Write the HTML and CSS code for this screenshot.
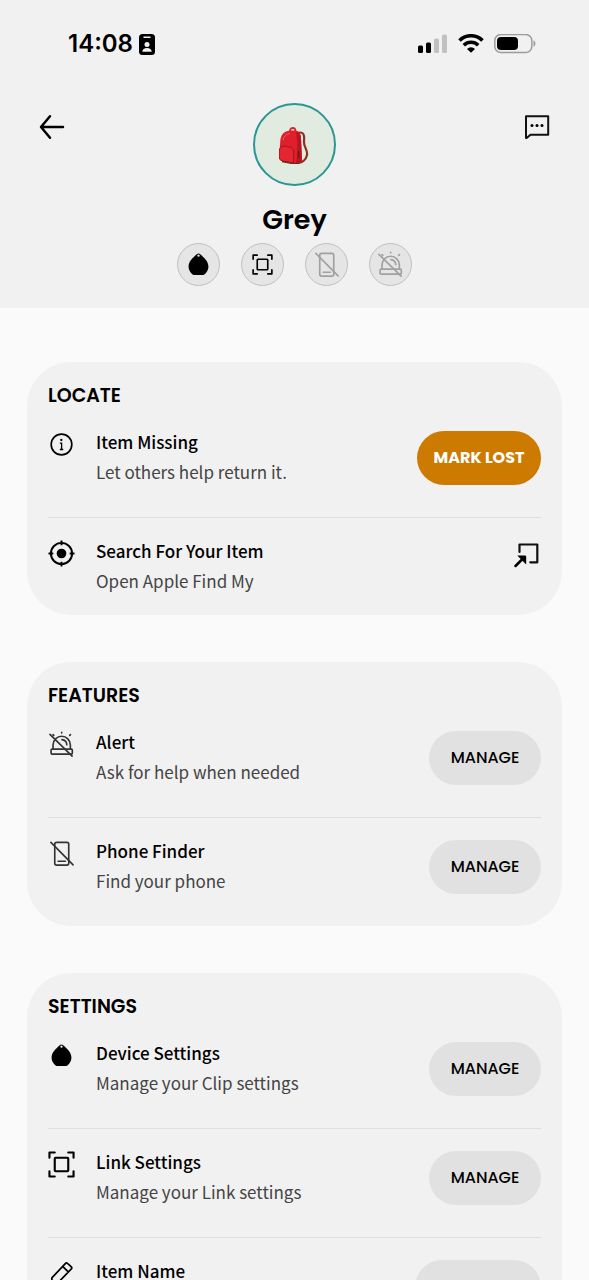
FILE: index.html
```html
<!DOCTYPE html>
<html lang="en">
<head>
<meta charset="utf-8">
<meta name="viewport" content="width=device-width, initial-scale=1">
<title>Grey</title>
<link rel="stylesheet" href="styles.css">
</head>
<body>
<svg class="sprite" aria-hidden="true">
  <symbol id="clip" viewBox="0 0 28 28">
    <path d="M14 2.500c1.400 0 2 .9 3 2 2.800 2.800 7.300 6.200 7.300 11.700 0 3.200-1.400 5.600-3.300 7.500-.9.9-1.600 1.300-2.900 1.300h-8.200c-1.300 0-2-.4-2.900-1.300-1.900-1.900-3.300-4.300-3.300-7.500 0-5.500 4.500-8.900 7.300-11.700 1-1.100 1.600-2 3-2z" fill="currentColor"/>
    <circle cx="14" cy="4.800" r="1.200" fill="#eee"/>
  </symbol>
  <symbol id="link" viewBox="0 0 28 28">
    <g fill="none" stroke="currentColor" stroke-width="2.200" stroke-linecap="round" stroke-linejoin="round">
      <rect x="7" y="7" width="14" height="14" rx="1"/>
      <path d="M1.500 7V1.500H7M21 1.500h5.500V7M26.500 21v5.500H21M7 26.500H1.500V21"/>
    </g>
  </symbol>
  <symbol id="phone-off" viewBox="0 0 28 28">
    <g fill="none" stroke="currentColor" stroke-width="1.700" stroke-linecap="round" stroke-linejoin="round">
      <rect x="7" y="2.500" width="14.500" height="23.500" rx="2"/>
      <path d="M10.500 22h7.500M3 2.500 26 25.800"/>
    </g>
  </symbol>
  <symbol id="alert-off" viewBox="0 0 28 28">
    <g fill="none" stroke="currentColor" stroke-width="1.700" stroke-linecap="round" stroke-linejoin="round">
      <rect x="3.200" y="18.800" width="22" height="5.200" rx="1"/>
      <path d="M5.200 18.500v-4a9 9 0 0 1 18 0v4M14.500 9c2.800.3 4.800 2.300 5 5.200M14.200 1.300v.8M22.500 4.500l.8-.8M6 4.500l-.8-.8M2 3.500 25 26"/>
    </g>
  </symbol>
</svg>

<div class="screen">
  <header class="hero">
    <div class="status">
      <div class="status-time">
        <span>14:08</span>
        <svg width="16" height="21" viewBox="0 0 16 21" aria-hidden="true">
          <rect width="16" height="21" rx="3.500"/>
          <path d="M5 3.200h6" stroke="#f1f1f1" stroke-width="1.500" stroke-linecap="round"/>
          <circle cx="8" cy="10.500" r="2.500" fill="#f1f1f1"/>
          <path d="M3.300 17.800c.2-2.600 2-3.800 4.700-3.800s4.500 1.200 4.700 3.800z" fill="#f1f1f1"/>
        </svg>
      </div>
      <div class="status-icons">
        <svg width="30" height="20" viewBox="0 0 30 20" aria-hidden="true">
          <rect y="11.500" width="5" height="7.500" rx="1.500"/>
          <rect x="8" y="8.500" width="5" height="10.500" rx="1.500"/>
          <g fill="#c1c1c1"><rect x="16" y="4.500" width="5" height="14.500" rx="1.500"/><rect x="24" y=".5" width="5" height="18.500" rx="1.500"/></g>
        </svg>
        <svg width="26" height="20" viewBox="0 0 26 20" aria-hidden="true">
          <g fill="none" stroke="#000" stroke-width="3.500">
            <path d="M1.500 6.500a16.200 16.200 0 0 1 23 0"/>
            <path d="M5.800 11.300a10.200 10.200 0 0 1 14.400 0"/>
          </g>
          <path d="M13 18.800 9 14.900a5.700 5.700 0 0 1 8 0z"/>
        </svg>
        <svg width="42" height="20" viewBox="0 0 42 20" aria-hidden="true">
          <rect x=".8" y=".5" width="37" height="18" rx="6" fill="none" stroke="#9c9c9c" stroke-width="1.500"/>
          <rect x="3" y="3" width="21" height="13" rx="4"/>
          <path d="M39.500 6.300c2.600 1 2.600 5.400 0 6.400z" fill="#9c9c9c"/>
        </svg>
      </div>
    </div>

    <div class="topbar">
      <button class="icon-button" aria-label="Back">
        <svg width="26" height="26" viewBox="0 0 26 26" aria-hidden="true"><path d="M24 13H2.500M11 2.300 2 13l9 10.700" fill="none" stroke="#000" stroke-width="2.500" stroke-linecap="round" stroke-linejoin="round"/></svg>
      </button>
      <div class="avatar">
        <svg width="32" height="38" viewBox="1 -1 32 38" role="img" aria-label="Backpack">
          <path d="M19 6c7-2 7.500 2 7 8s4 9 3 14-5 8-10 8" fill="none" stroke="#8c2f22" stroke-width="2.200"/>
          <path d="M12 4c0-4 5.500-4 5.500 0" fill="none" stroke="#d32b30" stroke-width="1.800"/>
          <path d="M2.200 15C2.500 7 7 3.500 13 3.500h3.500c4.500 0 6.500 3 6.500 7.500l1 22c0 2-1.500 3.500-4 3.500l-6-.3-9.500-2.200C2 33.500 1 32 1.200 29z" fill="#df1f2a"/>
          <path d="M18 5c4 1 5 3 5 7l1 21c0 2-1.500 3.500-4 3.500h-2c1.500-8 2-22 0-31.500z" fill="#b51622"/>
          <path d="M1.300 23c1-4 4-4.500 8-3.500 5 1 6.500 2.500 6.500 7l-.3 9.500-10.500-2c-3-.6-4-2-3.800-5z" fill="#e3262f" stroke="#a3131e"/>
          <path d="M4 34.500 14 36.500h7" fill="none" stroke="#74261f" stroke-width="1.300"/>
          <path d="M20.500 24v7" stroke="#4b2525" stroke-width="1.200"/>
          <path d="M5 13c1-4 3-6 7-6.500" fill="none" stroke="#ef5960"/>
        </svg>
      </div>
      <button class="icon-button" aria-label="Messages">
        <svg width="26" height="26" viewBox="0 0 26 26" aria-hidden="true"><path d="M2 24V2.200h22.200v18.600H6.500L2.600 24z" fill="none" stroke="#111" stroke-width="2" stroke-linejoin="round"/><circle cx="8" cy="11.500" r="1.500"/><circle cx="13" cy="11.500" r="1.500"/><circle cx="18" cy="11.500" r="1.500"/></svg>
      </button>
    </div>

    <h1 class="name">Grey</h1>
    <ul class="chips">
      <li class="chip"><svg class="icon-small" role="img" aria-label="Clip"><use href="#clip"/></svg></li>
      <li class="chip"><svg class="icon-tiny" role="img" aria-label="Link"><use href="#link"/></svg></li>
      <li class="chip off"><svg class="icon-small" role="img" aria-label="Phone finder off"><use href="#phone-off"/></svg></li>
      <li class="chip off"><svg class="icon-small" role="img" aria-label="Alert off"><use href="#alert-off"/></svg></li>
    </ul>
  </header>

  <main class="cards">
    <section class="card compact">
      <h2 class="card-title">LOCATE</h2>
      <div class="row">
        <svg class="icon" viewBox="0 0 28 28" aria-hidden="true"><circle cx="14" cy="14" r="10.700" fill="none" stroke="#000" stroke-width="1.700"/><path d="M12.300 12.500h1.800V19M12.300 19.200h3.500" fill="none" stroke="#000" stroke-width="1.400"/><circle cx="13.800" cy="9.300" r="1.200"/></svg>
        <div class="row-text"><h3 class="row-title">Item Missing</h3><p class="row-note">Let others help return it.</p></div>
        <button class="pill lost">MARK LOST</button>
      </div>
      <div class="row">
        <svg class="icon" viewBox="0 0 28 28" aria-hidden="true"><g fill="none" stroke="#000" stroke-width="2"><circle cx="14" cy="14" r="11"/><path d="M14 .5v5M14 22.500v5M.5 14h5M22.500 14h5"/></g><circle cx="14" cy="14" r="5"/></svg>
        <div class="row-text"><h3 class="row-title">Search For Your Item</h3><p class="row-note">Open Apple Find My</p></div>
        <button class="open" aria-label="Open Find My">
          <svg width="28" height="28" viewBox="0 0 28 28" aria-hidden="true"><path d="M6.500 11V3.500h17.800v17.800h-7" fill="none" stroke="#111" stroke-width="2.200" stroke-linecap="round" stroke-linejoin="round"/><path d="M2.500 25 10 17.500" stroke="#000" stroke-width="2.500" stroke-linecap="round"/><path d="M4.300 14.500H12q1.200 0 1.200 1.200v7.800z"/></svg>
        </button>
      </div>
    </section>

    <section class="card">
      <h2 class="card-title">FEATURES</h2>
      <div class="row">
        <svg class="icon soft" aria-hidden="true"><use href="#alert-off"/></svg>
        <div class="row-text"><h3 class="row-title">Alert</h3><p class="row-note">Ask for help when needed</p></div>
        <button class="pill">MANAGE</button>
      </div>
      <div class="row">
        <svg class="icon soft" aria-hidden="true"><use href="#phone-off"/></svg>
        <div class="row-text"><h3 class="row-title">Phone Finder</h3><p class="row-note">Find your phone</p></div>
        <button class="pill">MANAGE</button>
      </div>
    </section>

    <section class="card">
      <h2 class="card-title">SETTINGS</h2>
      <div class="row">
        <svg class="icon" aria-hidden="true"><use href="#clip"/></svg>
        <div class="row-text"><h3 class="row-title">Device Settings</h3><p class="row-note">Manage your Clip settings</p></div>
        <button class="pill">MANAGE</button>
      </div>
      <div class="row">
        <svg class="icon" aria-hidden="true"><use href="#link"/></svg>
        <div class="row-text"><h3 class="row-title">Link Settings</h3><p class="row-note">Manage your Link settings</p></div>
        <button class="pill">MANAGE</button>
      </div>
      <div class="row">
        <svg class="icon" viewBox="0 0 28 28" aria-hidden="true"><path d="M4 18.500 18.200 3.500q1-1 2 0l4 3.700q1 1 0 2L9.500 24.500H4zM15.200 6.700l5.800 5.700" fill="none" stroke="#000" stroke-width="1.800" stroke-linejoin="round"/></svg>
        <div class="row-text"><h3 class="row-title">Item Name</h3></div>
        <button class="pill wide" aria-label="Edit item name"></button>
      </div>
    </section>
  </main>
</div>
</body>
</html>
```

FILE: styles.css
```css
* { box-sizing: border-box; margin: 0; padding: 0; }

body {
  background: #fafafa;
  color: #000;
  font-family: "Noto Sans CJK JP", "Noto Sans", sans-serif;
}

button { border: 0; background: none; color: inherit; cursor: pointer; }
svg { display: block; flex: none; }

.sprite { display: none; }
.screen { height: 100vh; overflow: hidden; }

.hero { background: #f1f1f1; padding: 32px 39px 22px; }

.status { display: flex; justify-content: space-between; padding: 0 14px 0 29px; height: 24px; }
.status-time {
  display: flex; align-items: center; gap: 6px;
  font: 600 24px/24px Inter, sans-serif;
}
.status-icons { display: flex; align-items: center; gap: 10px; }

.topbar { display: flex; justify-content: space-between; padding-top: 47px; }
.icon-button { width: 26px; height: 26px; margin-top: 11px; }
.avatar {
  display: grid; place-items: center;
  width: 83px; height: 83px;
  border: 2px solid #2a9794; border-radius: 50%;
  background: #e1ebe0;
}

.name {
  margin-top: 14px;
  font: 600 27px/40px Poppins, Inter, sans-serif;
  text-align: center;
}

.chips { display: flex; justify-content: center; gap: 21px; margin-top: 3px; list-style: none; }
.chip {
  display: grid; place-items: center;
  width: 43px; height: 43px;
  border: 1px solid #c0c0c0; border-radius: 50%;
  background: #e5e5e5;
}
.off { color: #a0a0a0; }
.icon-small { width: 27px; height: 27px; }
.icon-tiny { width: 21px; height: 21px; }

.cards { display: flex; flex-direction: column; gap: 47px; padding: 54px 27px; }
.card { padding: 21px 21px 0; border-radius: 44px; background: #f1f1f1; }
.card-title { font: 600 19px/26px Poppins, Inter, sans-serif; }

.row { display: flex; align-items: center; padding: 19px 0 29px; }
.row + .row { border-top: 1px solid #dedede; }
.compact .row:last-child { padding-bottom: 18px; }

.icon { align-self: flex-start; width: 27px; height: 27px; margin-top: 3px; }
.soft { color: #333; }
.row-text { flex: 1; min-height: 60px; padding-left: 21px; }
.row-title { font-size: 17px; font-weight: 500; line-height: 28px; }
.row-note { color: #444; font-size: 17px; line-height: 32px; }

.pill {
  min-width: 112px; height: 54px; border-radius: 27px;
  background: #e1e1e1;
  font: 500 16px/24px Poppins, Inter, sans-serif;
}
.lost { min-width: 124px; background: #cc7a00; color: #fff; font-weight: 700; }
.wide { min-width: 126px; }
.open { align-self: flex-start; margin-top: 4px; }
```
